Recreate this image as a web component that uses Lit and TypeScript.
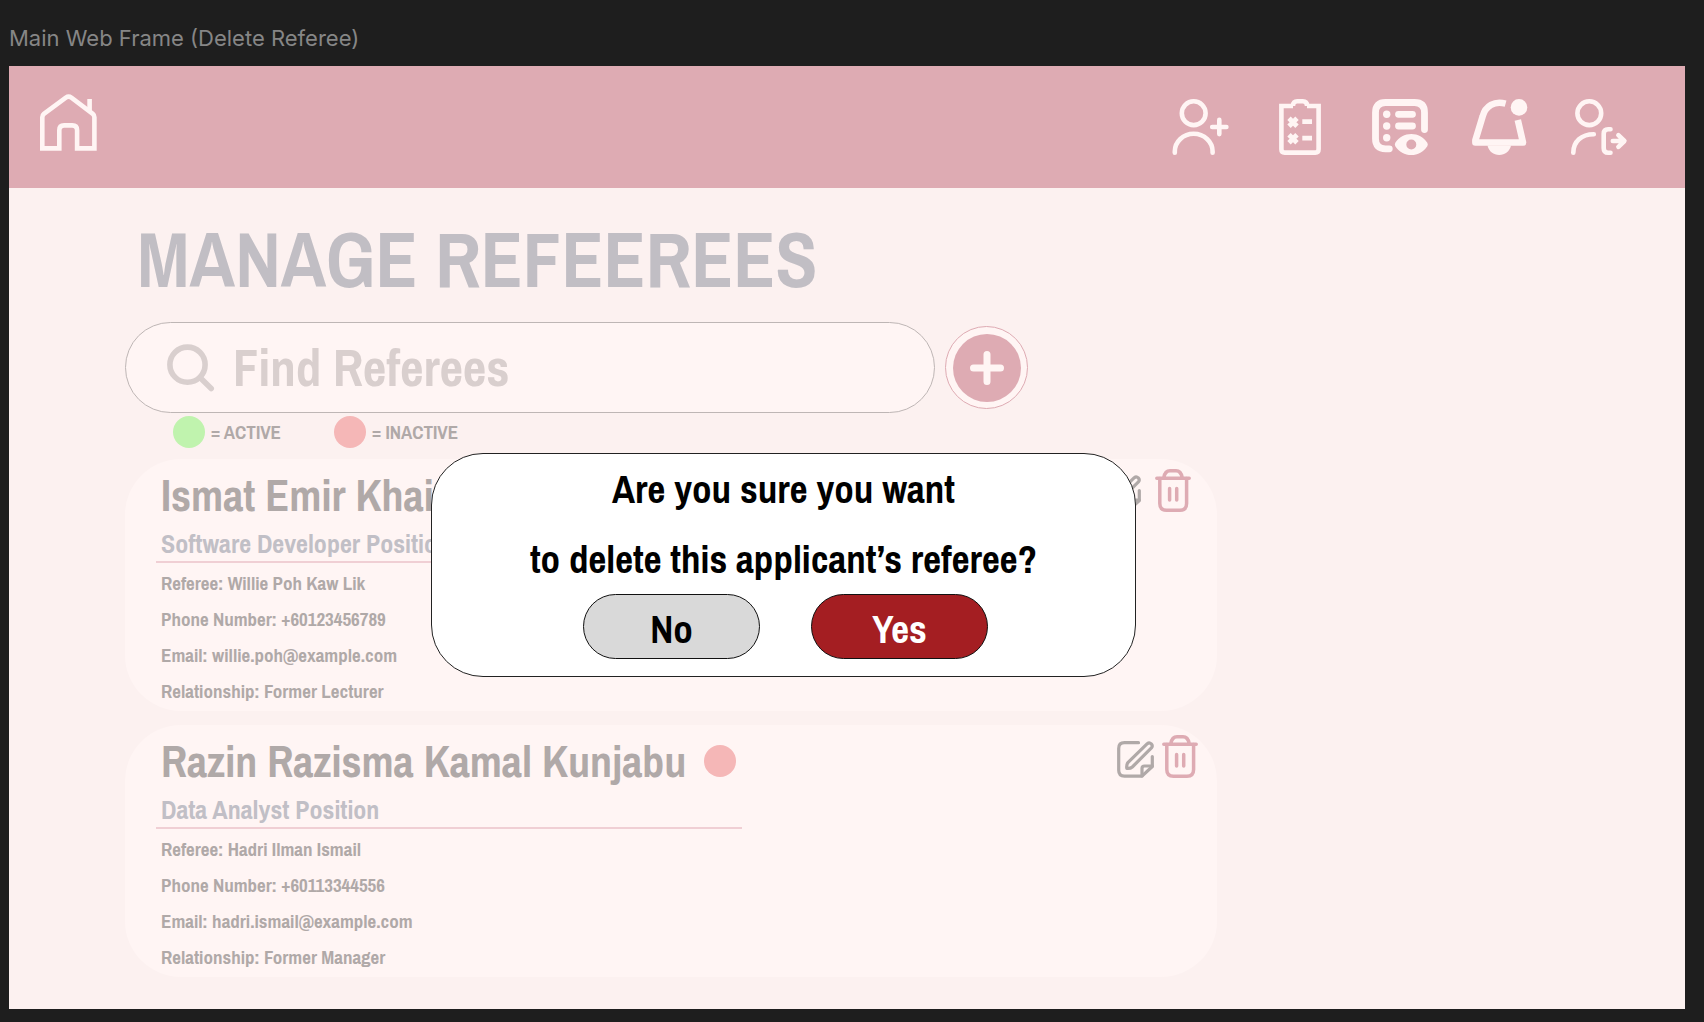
import { LitElement, html, css, svg } from "lit";
import { customElement, property } from "lit/decorators.js";
import { classMap } from "lit/directives/class-map.js";

interface Applicant {
  name: string;
  position: string;
  active: boolean;
  roomy: boolean;
  details: [string, string][];
}

const APPLICANTS: Applicant[] = [
  {
    name: "Ismat Emir Khai",
    position: "Software Developer Position",
    active: true,
    roomy: true,
    details: [
      ["Referee", "Willie Poh Kaw Lik"],
      ["Phone Number", "+60123456789"],
      ["Email", "willie.poh@example.com"],
      ["Relationship", "Former Lecturer"],
    ],
  },
  {
    name: "Razin Razisma Kamal Kunjabu",
    position: "Data Analyst Position",
    active: false,
    roomy: false,
    details: [
      ["Referee", "Hadri Ilman Ismail"],
      ["Phone Number", "+60113344556"],
      ["Email", "hadri.ismail@example.com"],
      ["Relationship", "Former Manager"],
    ],
  },
];

const homeIcon = svg`
  <path d="M2.3 54.4V23.2q0-2 1.6-3.3L25.8 3.6q2.8-1.8 5.6 0L52.8 19.9q1.6 1.3 1.6 3.3V54.4H37.1V36.2q0-4.8-4.8-4.8h-8.2q-4.8 0-4.8 4.8V54.4Z"/>
  <path d="M49.6 5v13"/>`;

const addUserIcon = svg`
  <circle cx="22.7" cy="14.2" r="11.9"/>
  <path d="M3.8 53.7v-1.2a18.9 17.7 0 0 1 37.8 0v1.2M41.2 28h14.2M48.3 20.9v14.2" stroke-linecap="round"/>`;

const checklistIcon = svg`
  <path d="M22 7H10.4V50.3q0 3.3 3.3 3.3H44.3q3.3 0 3.3-3.3V7H36M22 7V6.500q0-4.200 4.200-4.200h5.600q4.200 0 4.200 4.200V7" stroke-width="4.6"/>
  <path d="M18 19.300l8 8M26 19.300l-8 8M18 35.700l8 8M26 35.700l-8 8" stroke-width="4.800"/>
  <path d="M31.3 22.7H41M31.3 39.1H41" stroke-width="4.8"/>`;

const reviewIcon = svg`
  <path d="M18.3 49.8H14.5q-10 0-10-10V13.5q0-10 10-10h29q10 0 10 10V30.5M27.5 15.3h14M27.5 27h14" stroke-width="6.8" stroke-linecap="round"/>
  <g fill="currentColor" stroke="none">
    <circle cx="15.7" cy="15.3" r="3.7"/><circle cx="15.7" cy="27" r="3.7"/><circle cx="15.7" cy="38.7" r="3.7"/>
    <path fill-rule="evenodd" d="M24.3 43.8C28 38.2 33.8 35 40.3 35s12.300 3.200 16 8.800q1 1.700 0 3.400C52.600 52.800 46.800 56 40.300 56s-12.300-3.200-16-8.800q-1-1.700 0-3.400ZM40.300 40.500a5 5 0 1 0 0 10a5 5 0 1 0 0-10Z"/>
  </g>`;

const bellIcon = svg`
  <path d="M34.600 4.600C23.500 1.600 14.500 6.600 11.600 17.500L4.400 41.300V43.500H52L46.800 21" stroke-width="6.600" stroke-linejoin="round"/>
  <g fill="currentColor" stroke="none">
    <circle cx="48" cy="8.400" r="8.300"/>
    <path d="M16.500 46.500H40C38.500 52.500 34 56 28.200 56S18 52.500 16.500 46.500Z"/>
  </g>`;

const logoutIcon = svg`
  <circle cx="18.300" cy="14.200" r="11.900"/>
  <g stroke-linecap="round" stroke-linejoin="round">
    <path d="M2.300 53.700C2.300 42.500 10.500 35.200 22.800 35.200M39.500 30.300h-2.300q-4.500 0-4.500 4.500v14.400q0 4.500 4.500 4.500h2.300"/>
    <path d="M41.800 42H53M47.400 36.200L53.400 42L47.400 47.800"/>
  </g>`;

const searchIcon = svg`
  <circle cx="20.500" cy="20.700" r="17.600"/>
  <path d="M33.500 34L44.200 44.500" stroke-linecap="round"/>`;

const editIcon = svg`
  <path d="M21.500 1.700H7.500q-5.800 0-5.800 5.800v21.800q0 5.800 5.800 5.800H25L35.300 25.500V15.500"/>
  <path d="M25 35V27.500q0-2.500 2.500-2.500H35.300"/>
  <path d="M9.800 27.400q-.5-4 1.300-6L30.300 2.700q2-1.700 4 .2q1.800 2 .1 4L15.300 26q-2 1.800-5.500 1.400Z"/>`;

const trashIcon = svg`
  <path d="M1.800 9.200H34.200M8.700 8.800C9.500 4.500 12 1.800 15 1.800h6c3 0 5.500 2.700 6.300 7"/>
  <path d="M4.800 9.500V34.500q0 6.700 6.700 6.700H25q6.600 0 6.600-6.700V9.500M14.600 19.500v11.400M21.700 19.500v11.400"/>`;

@customElement("applicant-card")
class ApplicantCard extends LitElement {
  @property({ attribute: false }) applicant!: Applicant;

  static styles = css`
    :host {
      display: block;
    }
    .card {
      display: flex;
      justify-content: space-between;
      align-items: flex-start;
      padding: 8px 19px 2px 31px;
      border-radius: 56px;
      background: #fff5f4;
      color: #b0a9a8;
    }
    .info {
      flex: 0 1 586px;
      min-width: 0;
    }
    .heading {
      display: flex;
      align-items: center;
      gap: 18px;
      padding-left: 5px;
    }
    .name {
      margin: 0;
      font-size: 44px;
      line-height: 56px;
      white-space: nowrap;
    }
    .dot {
      flex: none;
      width: 32px;
      height: 32px;
      border-radius: 50%;
      background: #f5b7b7;
    }
    .dot.active {
      background: #c0f3ae;
    }
    .position {
      margin: 4px 0 0;
      padding-left: 5px;
      border-bottom: 2px solid #f0cfd4;
      color: #c1bfc6;
      font-size: 26px;
      line-height: 34px;
      font-weight: 700;
    }
    .details {
      margin: 2px 0 0;
      padding: 0 0 0 5px;
      list-style: none;
      font-size: 19px;
      line-height: 36px;
      font-weight: 700;
    }
    .actions {
      display: flex;
      align-items: flex-end;
      gap: 8px;
      padding-top: 2px;
    }
    .actions.roomy {
      gap: 14px;
      padding-right: 7px;
    }
    .action {
      display: block;
      padding: 0;
      border: 0;
      background: none;
      color: #b0a9a8;
      cursor: pointer;
    }
    .action.remove {
      color: #deabb3;
    }
    .action svg {
      display: block;
      fill: none;
      stroke: currentColor;
      stroke-width: 3.2;
      stroke-linecap: round;
      stroke-linejoin: round;
    }
    .action.remove svg {
      stroke-width: 3.5;
    }
  `;

  render() {
    const a = this.applicant;
    return html`
      <article class="card">
        <div class="info">
          <div class="heading">
            <h2 class="name">${a.name}</h2>
            <span class=${classMap({ dot: true, active: a.active })}></span>
          </div>
          <p class="position">${a.position}</p>
          <ul class="details">
            ${a.details.map(([label, value]) => html`<li>${label}: ${value}</li>`)}
          </ul>
        </div>
        <div class=${classMap({ actions: true, roomy: a.roomy })}>
          <button class="action" type="button" aria-label="Edit referee">
            <svg width="37" height="37" viewBox="0 0 37 37">${editIcon}</svg>
          </button>
          <button class="action remove" type="button" aria-label="Delete referee">
            <svg width="36" height="43" viewBox="0 0 36 43">${trashIcon}</svg>
          </button>
        </div>
      </article>
    `;
  }
}

@customElement("app-root")
class AppRoot extends LitElement {
  static styles = css`
    :host {
      display: block;
      font-family: "Archivo Narrow", "Liberation Sans Narrow", "Liberation Sans", sans-serif;
    }
    .canvas {
      box-sizing: border-box;
      display: flex;
      flex-direction: column;
      min-height: 100vh;
      padding: 0 19px 13px 9px;
      background: #1e1e1e;
    }
    .frame-label {
      padding: 24px 0 14px;
      color: #868686;
      font-family: Inter, sans-serif;
      font-size: 22px;
      line-height: 28px;
    }
    .frame {
      position: relative;
      flex: 1;
      background: #fcf1f0;
    }
    .topbar {
      display: flex;
      justify-content: space-between;
      align-items: flex-start;
      padding: 28px 58px 33px 31px;
      background: #deabb3;
      color: #fff5f4;
    }
    .nav {
      display: flex;
      gap: 44px;
      padding-top: 5px;
    }
    .nav-link {
      display: block;
      color: inherit;
    }
    .nav-link svg {
      display: block;
      overflow: visible;
      fill: none;
      stroke: currentColor;
      stroke-width: 4.6;
    }
    .content {
      box-sizing: border-box;
      max-width: 1208px;
      padding: 21px 0 31px 116px;
    }
    .title {
      margin: 0 0 13px;
      padding-left: 12px;
      color: #c1bec4;
      font-size: 77px;
      line-height: 100px;
      white-space: nowrap;
    }
    .search-row {
      display: flex;
      align-items: center;
      gap: 10px;
    }
    .search {
      box-sizing: border-box;
      flex: 0 1 810px;
      display: flex;
      align-items: center;
      gap: 18px;
      height: 91px;
      padding: 0 41px;
      border: 1px solid #beb6b5;
      border-radius: 46px;
      background: #fff5f4;
      color: #d9cfce;
    }
    .search svg {
      flex: none;
      fill: none;
      stroke: currentColor;
      stroke-width: 5.6;
    }
    .search-input {
      flex: 1;
      min-width: 0;
      padding: 0;
      border: 0;
      outline: 0;
      background: none;
      color: inherit;
      font: 700 51px/60px "Archivo Narrow", "Liberation Sans Narrow", "Liberation Sans", sans-serif;
    }
    .search-input::placeholder {
      color: #d9cfce;
      opacity: 1;
    }
    .add {
      flex: none;
      box-sizing: border-box;
      width: 83px;
      height: 83px;
      padding: 0;
      display: grid;
      place-items: center;
      border: 1px solid #deabb3;
      border-radius: 50%;
      background: #fff5f4;
      cursor: pointer;
    }
    .legend {
      display: flex;
      gap: 53px;
      margin: 3px 0 11px;
      padding: 0 0 0 48px;
      list-style: none;
      color: #b0a9a8;
      font-size: 19px;
      line-height: 32px;
      font-weight: 700;
    }
    .legend-item {
      display: flex;
      gap: 6px;
    }
    .dot {
      width: 32px;
      height: 32px;
      border-radius: 50%;
      background: #f5b7b7;
    }
    .dot.active {
      background: #c0f3ae;
    }
    .cards {
      display: flex;
      flex-direction: column;
      gap: 14px;
    }
    .confirm {
      box-sizing: border-box;
      position: absolute;
      top: 387px;
      left: 422px;
      width: 705px;
      margin: 0;
      padding: 0 0 17px;
      border: 1px solid #222;
      border-radius: 52px;
      background: #fff;
      color: #000;
      text-align: center;
    }
    .question {
      margin: 0;
      font-size: 39px;
      line-height: 70px;
      font-weight: 700;
    }
    .choices {
      display: flex;
      justify-content: center;
      gap: 51px;
      padding-left: 4px;
    }
    .choice {
      box-sizing: border-box;
      width: 177px;
      height: 65px;
      padding: 5px 0 0;
      border: 1px solid #111;
      border-radius: 33px;
      background: #d9d9d9;
      color: #000;
      font: 700 39px/44px "Archivo Narrow", "Liberation Sans Narrow", "Liberation Sans", sans-serif;
      cursor: pointer;
    }
    .choice.yes {
      background: #a41e22;
      color: #fff;
    }
  `;

  private navLink(label: string, icon: unknown) {
    return html`
      <a class="nav-link" href="#" aria-label=${label}>
        <svg width="56" height="56" viewBox="0 0 56 56">${icon}</svg>
      </a>
    `;
  }

  render() {
    return html`
      <div class="canvas">
        <div class="frame-label">Main Web Frame (Delete Referee)</div>
        <div class="frame">
          <header class="topbar">
            <a class="nav-link" href="#" aria-label="Home">
              <svg width="58" height="58" viewBox="0 0 58 58">${homeIcon}</svg>
            </a>
            <nav class="nav">
              ${this.navLink("Add user", addUserIcon)}
              ${this.navLink("Checklist", checklistIcon)}
              ${this.navLink("Review list", reviewIcon)}
              ${this.navLink("Notifications", bellIcon)}
              ${this.navLink("Log out", logoutIcon)}
            </nav>
          </header>
          <main class="content">
            <h1 class="title">MANAGE REFEEREES</h1>
            <div class="search-row">
              <label class="search">
                <svg width="48" height="48" viewBox="0 0 48 48" aria-hidden="true">${searchIcon}</svg>
                <input class="search-input" type="text" placeholder="Find Referees" aria-label="Find Referees" />
              </label>
              <button class="add" type="button" aria-label="Add referee">
                <svg width="68" height="68" viewBox="0 0 68 68">
                  <circle cx="34" cy="34" r="34" fill="#deabb3" />
                  <path d="M20.500 34h27M34 20.500v27" stroke="#fff5f4" stroke-width="7" stroke-linecap="round" />
                </svg>
              </button>
            </div>
            <ul class="legend">
              <li class="legend-item"><span class="dot active"></span>= ACTIVE</li>
              <li class="legend-item"><span class="dot"></span>= INACTIVE</li>
            </ul>
            <div class="cards">
              ${APPLICANTS.map((a) => html`<applicant-card .applicant=${a}></applicant-card>`)}
            </div>
          </main>
          <section class="confirm" role="alertdialog" aria-label="Delete referee">
            <p class="question">Are you sure you want<br />to delete this applicant’s referee?</p>
            <div class="choices">
              <button class="choice" type="button">No</button>
              <button class="choice yes" type="button">Yes</button>
            </div>
          </section>
        </div>
      </div>
    `;
  }
}
